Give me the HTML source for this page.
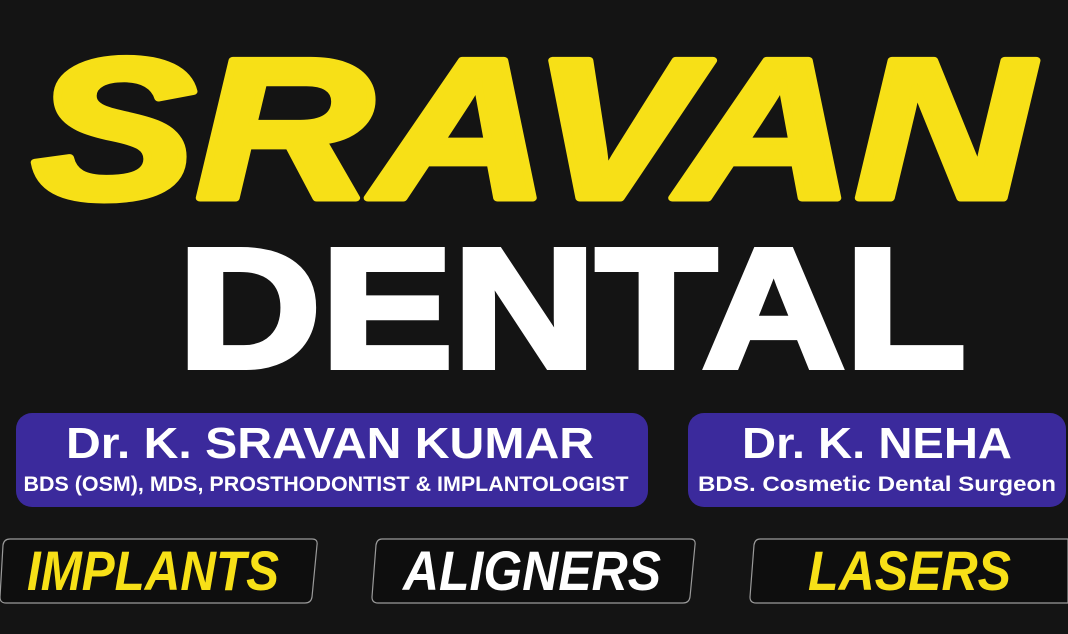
<!DOCTYPE html>
<html><head><meta charset="utf-8"><style>
html,body{margin:0;padding:0;background:#141414;width:1068px;height:634px;overflow:hidden}
svg{display:block}
</style></head><body>
<svg width="1068" height="634" viewBox="0 0 1068 634" xmlns="http://www.w3.org/2000/svg">
<rect width="1068" height="634" fill="#141414"/>
<text x="32" y="198" font-family="Liberation Sans, sans-serif" font-weight="bold" font-style="italic" font-size="200" fill="#f7e017" stroke="#f7e017" stroke-width="7" stroke-linejoin="round" textLength="1000" lengthAdjust="spacingAndGlyphs">SRAVAN</text>
<text x="178" y="367" font-family="Liberation Sans, sans-serif" font-weight="bold" font-size="170" fill="#ffffff" stroke="#ffffff" stroke-width="6" textLength="788" lengthAdjust="spacingAndGlyphs">DENTAL</text>
<rect x="16" y="413" width="632" height="94" rx="16" fill="#3b2a9c"/>
<rect x="688" y="413" width="378" height="94" rx="16" fill="#3b2a9c"/>
<g font-family="Liberation Sans, sans-serif" font-weight="bold" fill="#fff" text-anchor="middle">
<text x="330" y="458" font-size="44" textLength="528" lengthAdjust="spacingAndGlyphs">Dr. K. SRAVAN KUMAR</text>
<text x="326" y="491" font-size="21" textLength="605" lengthAdjust="spacingAndGlyphs">BDS (OSM), MDS, PROSTHODONTIST &amp; IMPLANTOLOGIST</text>
<text x="877" y="458" font-size="44" textLength="270" lengthAdjust="spacingAndGlyphs">Dr. K. NEHA</text>
<text x="877" y="491" font-size="21" textLength="358" lengthAdjust="spacingAndGlyphs">BDS. Cosmetic Dental Surgeon</text>
</g>
<g fill="#0e0e0e" stroke="#9a9a9a" stroke-width="1.2">
<path d="M10 539 H312 Q318 539 317 545 L312 597 Q311 603 305 603 H6 Q0 603 0 597 L3 545 Q4 539 10 539 Z"/>
<path d="M382 539 H690 Q696 539 695 545 L690 597 Q689 603 683 603 H378 Q372 603 372 597 L376 545 Q377 539 382 539 Z"/>
<path d="M760 539 H1068 V603 H756 Q750 603 750 597 L754 545 Q755 539 760 539 Z"/>
</g>
<g font-family="Liberation Sans, sans-serif" font-weight="bold" font-style="italic" font-size="56">
<text x="27" y="590" fill="#f7e017" textLength="252" lengthAdjust="spacingAndGlyphs">IMPLANTS</text>
<text x="403" y="590" fill="#ffffff" textLength="258" lengthAdjust="spacingAndGlyphs">ALIGNERS</text>
<text x="808" y="590" fill="#f7e017" textLength="203" lengthAdjust="spacingAndGlyphs">LASERS</text>
</g>
</svg>
</body></html>
